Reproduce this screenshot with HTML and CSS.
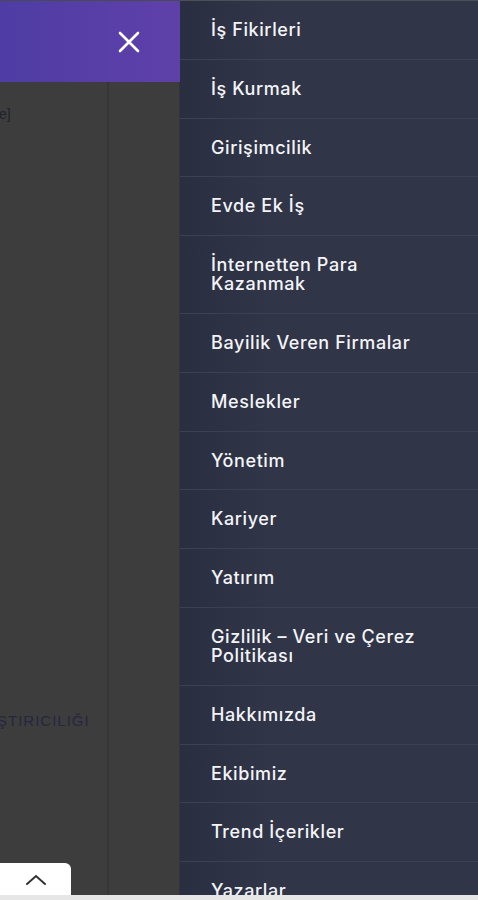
FILE: index.html
```html
<!DOCTYPE html>
<html lang="tr">
<head>
    <meta charset="UTF-8">
    <meta name="viewport" content="width=device-width, initial-scale=1.0">
    <title>Menü</title>
    <link rel="stylesheet" href="styles.css">
</head>
<body>

<div class="screen">
    <div class="page-side">
        <div class="side-header">
            <button class="close-button" aria-label="Kapat">
                <svg width="22" height="22" viewBox="0 0 22 22">
                    <path d="M2 2 L20 20 M20 2 L2 20" stroke="#fff" stroke-width="2.6" stroke-linecap="round"/>
                </svg>
            </button>
        </div>
        <div class="side-body">
            <div class="side-main">
                <div class="side-snippet">e]</div>
                <div class="side-caption">ŞTIRICILIĞI</div>
            </div>
            <div class="side-aside"></div>
        </div>
        <button class="scroll-top" aria-label="Yukarı">
            <svg width="22" height="12" viewBox="0 0 22 12">
                <path d="M2 10 L11 2 L20 10" fill="none" stroke="#333" stroke-width="2" stroke-linecap="round"/>
            </svg>
        </button>
    </div>

    <nav class="menu">
        <a class="menu-item" href="#">İş Fikirleri</a>
        <a class="menu-item" href="#">İş Kurmak</a>
        <a class="menu-item" href="#">Girişimcilik</a>
        <a class="menu-item" href="#">Evde Ek İş</a>
        <a class="menu-item" href="#">İnternetten Para<br>Kazanmak</a>
        <a class="menu-item" href="#">Bayilik Veren Firmalar</a>
        <a class="menu-item" href="#">Meslekler</a>
        <a class="menu-item" href="#">Yönetim</a>
        <a class="menu-item" href="#">Kariyer</a>
        <a class="menu-item" href="#">Yatırım</a>
        <a class="menu-item" href="#">Gizlilik – Veri ve Çerez<br>Politikası</a>
        <a class="menu-item" href="#">Hakkımızda</a>
        <a class="menu-item" href="#">Ekibimiz</a>
        <a class="menu-item" href="#">Trend İçerikler</a>
        <a class="menu-item" href="#">Yazarlar</a>
    </nav>
</div>
<div class="bottom-strip"></div>

</body>
</html>
```

FILE: styles.css
```css
body {
    margin: 0;
    padding: 0;
    height: 900px;
    overflow: hidden;
    background-color: #e9e9e9;
    font-family: Inter, "Open Sans", sans-serif;
}
.screen {
    display: flex;
    height: 895px;
    overflow: hidden;
}
.page-side {
    width: 180px;
    flex-shrink: 0;
    display: flex;
    flex-direction: column;
    background-color: #3d3d3d;
    position: relative;
}
.side-header {
    height: 82px;
    background: linear-gradient(to right, #4e3da4, #5f40a9);
    border-top: 1px solid #4a4a55;
    box-sizing: border-box;
    display: flex;
    justify-content: flex-end;
    align-items: center;
    padding-right: 40px; /* X sits a bit left of the panel edge */
}
.close-button {
    background: none;
    border: none;
    padding: 0;
    width: 22px;
    height: 22px;
    cursor: pointer;
}
.side-body {
    flex-grow: 1;
    display: flex;
}
.side-main {
    width: 107px;
    border-right: 2px solid #363636;
    overflow: hidden;
}
.side-snippet {
    margin-top: 24px;
    margin-left: -1px;
    font-size: 14px;
    color: #22222c;
    font-family: "Liberation Sans", sans-serif;
}
.side-caption {
    margin-top: 590px;
    margin-left: -3px;
    font-size: 15px;
    letter-spacing: 1px;
    color: #262640;
    font-family: "Liberation Sans", sans-serif;
    white-space: nowrap;
}
.side-aside {
    flex-grow: 1;
    border-right: 1px solid #343434;
}
.scroll-top {
    position: absolute;
    left: 0;
    bottom: 0;
    width: 71px;
    height: 32px;
    background-color: #ffffff;
    border: none;
    border-top-right-radius: 6px;
    display: flex;
    justify-content: center;
    align-items: center;
    padding-top: 2px;
}
.menu {
    flex-grow: 1;
    display: flex;
    flex-direction: column;
    background: linear-gradient(to right, #2a2e41, #303548 30%, #313548);
    border-top: 1px solid #4b4f5b;
}
.menu-item {
    display: block;
    padding: 19px 20px 19.8px 31px;
    border-bottom: 1px solid #3b4053;
    color: #f4f4f8;
    text-decoration: none;
    font-size: 18px;
    font-weight: 500;
    line-height: 19px;
    letter-spacing: 0.6px;
    white-space: nowrap;
}
.bottom-strip {
    height: 5px;
    background-color: #e6e6e6;
}
```
